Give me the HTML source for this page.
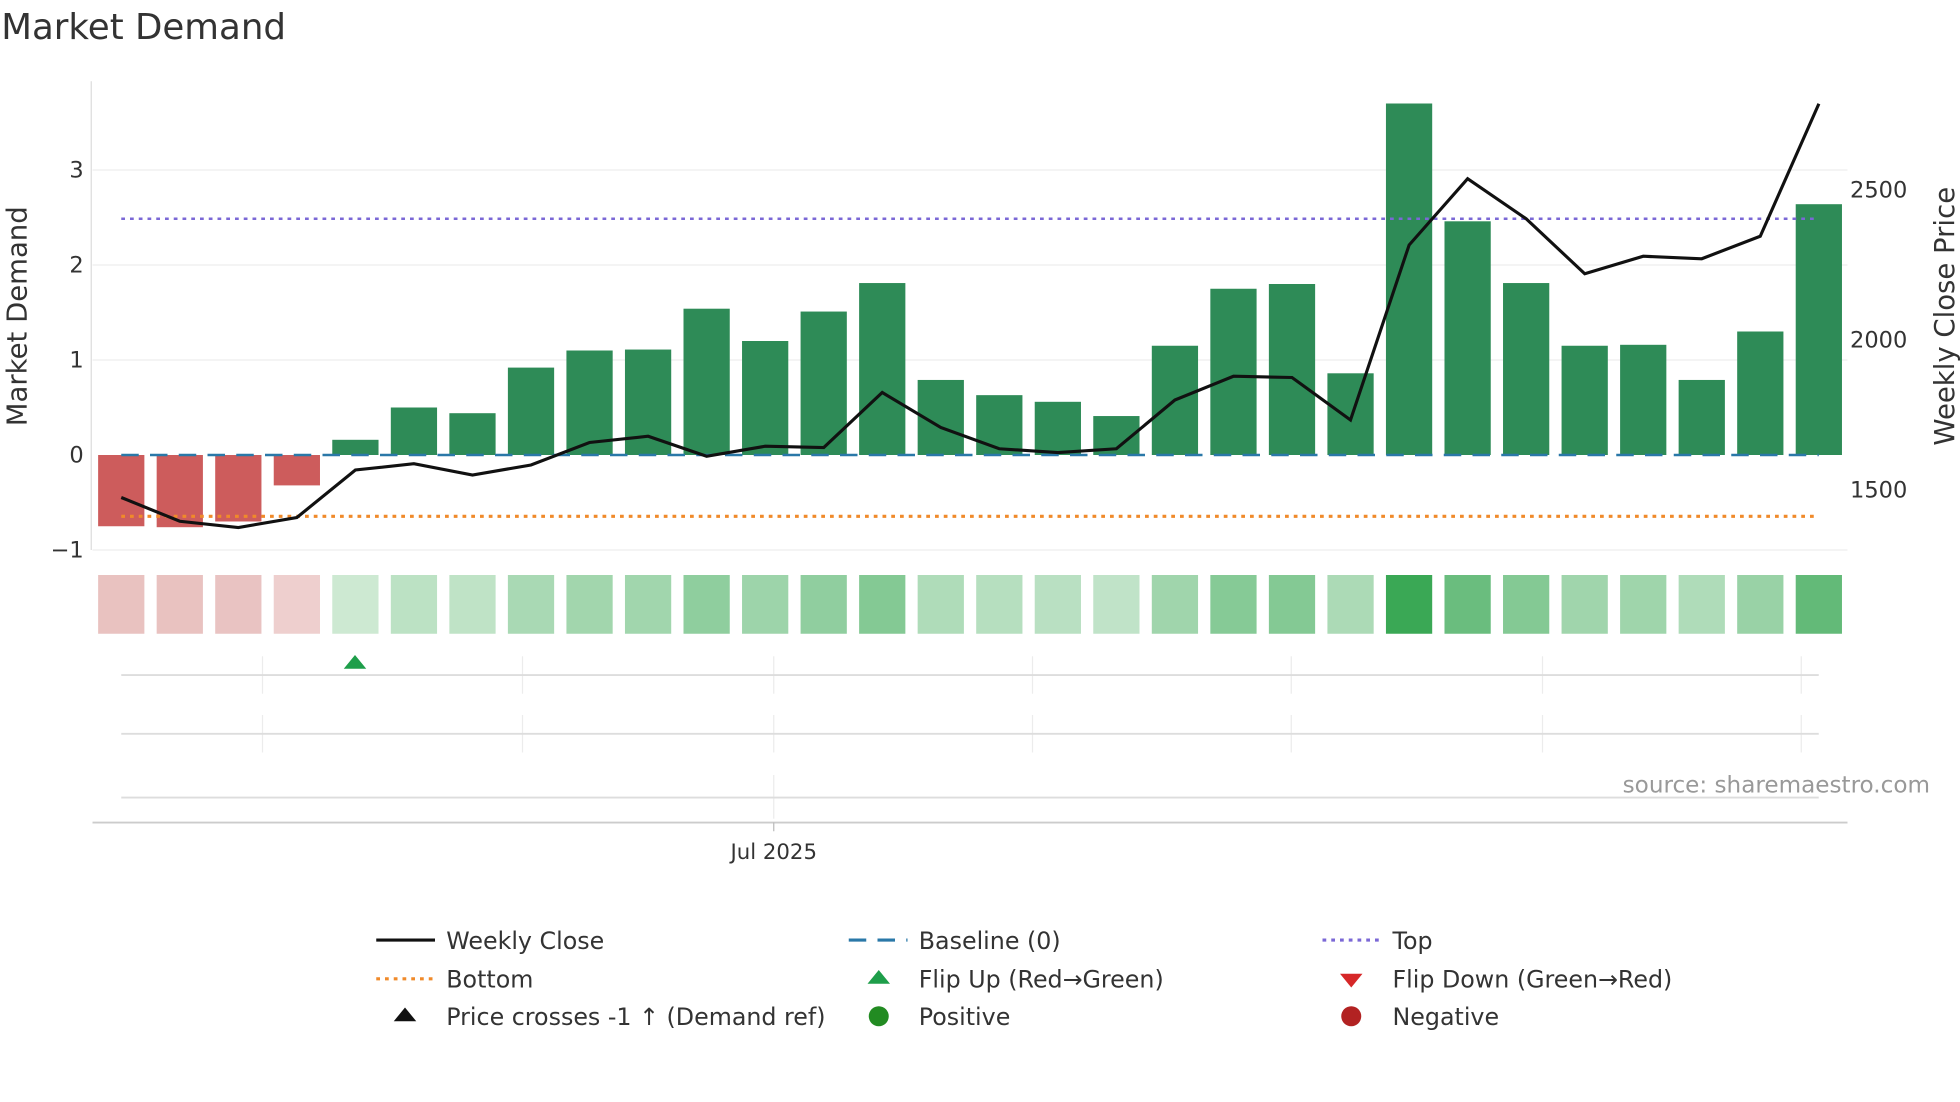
<!DOCTYPE html>
<html><head><meta charset="utf-8"><style>
html,body{margin:0;padding:0;background:#fff;}
svg{display:block;font-family:"DejaVu Sans","Liberation Sans",sans-serif;}
</style></head><body>
<svg id="s" width="1960" height="1102" viewBox="0 0 1568 881.6" xmlns="http://www.w3.org/2000/svg">
<rect width="1568" height="882" fill="#fff"/>
<text x="1" y="31" font-size="28.5" fill="#333">Market Demand</text>
<g stroke="#eee" stroke-width="1">
<line x1="74" x2="1478" y1="136" y2="136"/><line x1="74" x2="1478" y1="212" y2="212"/>
<line x1="74" x2="1478" y1="288" y2="288"/><line x1="74" x2="1478" y1="440" y2="440"/>
</g>
<line x1="73" x2="73" y1="65" y2="440" stroke="#ddd"/>
<g font-size="18" fill="#333" text-anchor="end">
<text x="67" y="142">3</text><text x="67" y="218">2</text><text x="67" y="294">1</text><text x="67" y="370">0</text><text x="67" y="446">−1</text>
</g>
<g font-size="18" fill="#333">
<text x="1480" y="158">2500</text><text x="1480" y="278">2000</text><text x="1480" y="398">1500</text>
</g>
<text transform="translate(21,253) rotate(-90)" font-size="22" fill="#333" text-anchor="middle">Market Demand</text>
<text transform="translate(1563,253) rotate(-90)" font-size="22" fill="#333" text-anchor="middle">Weekly Close Price</text>
<g id="bars"></g>
<line x1="97" x2="1455" y1="364" y2="364" stroke="#2a78a8" stroke-width="2" stroke-dasharray="14,9"/>
<line x1="97" x2="1455" y1="175" y2="175" stroke="#7b68d6" stroke-width="2" stroke-dasharray="3,4"/>
<line x1="97" x2="1455" y1="413" y2="413" stroke="#f08a2a" stroke-width="2.5" stroke-dasharray="3,4"/>
<polyline id="pl" fill="none" stroke="#111" stroke-width="2.5"/>
<g id="heat"></g>
<g stroke="#ececec" stroke-width="1" id="vg"></g>
<g stroke="#ddd" stroke-width="1.5">
<line x1="97" x2="1455" y1="540" y2="540"/><line x1="97" x2="1455" y1="587" y2="587"/><line x1="97" x2="1455" y1="638" y2="638"/>
</g>
<line x1="74" x2="1478" y1="658" y2="658" stroke="#ccc" stroke-width="1.5"/>
<line x1="619" x2="619" y1="658" y2="665" stroke="#bbb"/>
<polygon points="284,524 275,535 293,535" fill="#1e9e4a"/>
<text x="619" y="687" font-size="17" fill="#333" text-anchor="middle">Jul 2025</text>
<text x="1544" y="634" font-size="18.5" fill="#999" text-anchor="end">source: sharemaestro.com</text>
<g font-size="19" fill="#333">
<line x1="301" x2="348" y1="752" y2="752" stroke="#111" stroke-width="2.5"/><text x="357" y="759">Weekly Close</text>
<line x1="301" x2="348" y1="783" y2="783" stroke="#f08a2a" stroke-width="2.5" stroke-dasharray="3,4"/><text x="357" y="790">Bottom</text>
<polygon points="324,806 315,817 333,817" fill="#111"/><text x="357" y="820">Price crosses -1 ↑ (Demand ref)</text>
<line x1="679" x2="726" y1="752" y2="752" stroke="#2a78a8" stroke-width="2.5" stroke-dasharray="14,9"/><text x="735" y="759">Baseline (0)</text>
<polygon points="703,776 694,787 712,787" fill="#1e9e4a"/><text x="735" y="790">Flip Up (Red→Green)</text>
<circle cx="703" cy="813" r="8" fill="#228b22"/><text x="735" y="820">Positive</text>
<line x1="1058" x2="1105" y1="752" y2="752" stroke="#7b68d6" stroke-width="2.5" stroke-dasharray="3,4"/><text x="1114" y="759">Top</text>
<polygon points="1072,779 1090,779 1081,790" fill="#d62728"/><text x="1114" y="790">Flip Down (Green→Red)</text>
<circle cx="1081" cy="813" r="8" fill="#b22222"/><text x="1114" y="820">Negative</text>
</g>
</svg>
<script>
var v=[-0.75,-0.76,-0.7,-0.32,0.16,0.5,0.44,0.92,1.1,1.11,1.54,1.2,1.51,1.81,0.79,0.63,0.56,0.41,1.15,1.75,1.8,0.86,3.7,2.46,1.81,1.15,1.16,0.79,1.3,2.64];
var p=[398,417,422,414,376,371,380,372,354,349,365,357,358,314,342,359,362,359,320,301,302,336,196,143,175,219,205,207,189,83];
var NS="http://www.w3.org/2000/svg",b=document.getElementById('bars'),h=document.getElementById('heat'),pts=[];
function mix(a,c,t){return 'rgb('+a.map(function(x,i){return Math.round(x+(c[i]-x)*t)}).join(',')+')'}
for(var i=0;i<30;i++){var cx=97+i*46.83,val=v[i],y0=364,y1=364-val*76;
var r=document.createElementNS(NS,'rect');r.setAttribute('x',cx-18.5);r.setAttribute('width',37);
r.setAttribute('y',Math.min(y0,y1));r.setAttribute('height',Math.abs(y1-y0));r.setAttribute('fill',val<0?'#cd5c5c':'#2e8b57');b.appendChild(r);
var q=document.createElementNS(NS,'rect');q.setAttribute('x',cx-18.5);q.setAttribute('width',37);q.setAttribute('y',460);q.setAttribute('height',47);
var t=Math.min(Math.abs(val)/3.7,1);
q.setAttribute('fill',val<0?mix([242,216,216],[232,192,190],t/0.22):mix([214,237,218],[58,168,85],Math.pow(t,0.9)));h.appendChild(q);
pts.push(cx.toFixed(1)+','+p[i]);}
document.getElementById('pl').setAttribute('points',pts.join(' '));
var vg=document.getElementById('vg');[210,418,619,826,1033,1234,1441].forEach(function(x){
[[525,555],[572,602],[620,655]].forEach(function(s){if(x!=619&&s[0]==620)return;var l=document.createElementNS(NS,'line');l.setAttribute('x1',x);l.setAttribute('x2',x);l.setAttribute('y1',s[0]);l.setAttribute('y2',s[1]);vg.appendChild(l);});});
</script>
</body></html>
